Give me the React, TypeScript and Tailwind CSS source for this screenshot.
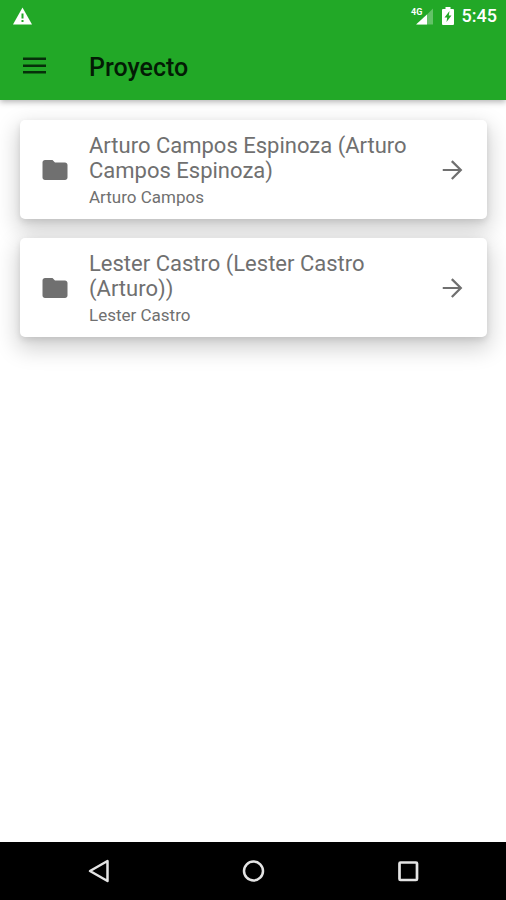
const projects = [
  { name: "Arturo Campos Espinoza (Arturo Campos Espinoza)", owner: "Arturo Campos" },
  { name: "Lester Castro (Lester Castro (Arturo))", owner: "Lester Castro" },
];

function StatusBar() {
  return (
    <div className="flex h-8 items-center justify-between pr-[9px] pl-3 text-white">
      <svg className="h-5 w-5" viewBox="0 0 20 20" aria-hidden="true">
        <path d="M10.500 1.500 20 18.500H1Z" fill="currentColor" />
        <path d="M9.500 7.500h2v5h-2zM9.500 14h2v2h-2z" fill="#22a827" />
      </svg>
      <div className="flex items-center">
        <svg className="h-5 w-6" viewBox="0 0 24 20" aria-hidden="true">
          <path d="M23 2.500v16H7Z" fill="currentColor" opacity=".3" />
          <path d="M17 8.500v10H6Z" fill="currentColor" />
          <text x="1" y="9" fontSize="9" fontWeight="700" fontFamily="Roboto, sans-serif" fill="currentColor">
            4G
          </text>
        </svg>
        <svg className="ml-2 h-5 w-3" viewBox="0 0 12 20" aria-hidden="true">
          <path d="M3.500 1h5v2H11q1 0 1 1v14q0 1-1 1H1q-1 0-1-1V4q0-1 1-1h2.500Z" fill="currentColor" />
          <path d="M7.500 5 2.500 11.500h2.700L4.500 16 9.500 9.500H6.800Z" fill="#22a827" />
        </svg>
        <span className="ml-2 text-[18px] leading-6 font-medium">5:45</span>
      </div>
    </div>
  );
}

function ProjectCard({ name, owner }: { name: string; owner: string }) {
  return (
    <li>
      <button
        type="button"
        className="flex w-full items-center rounded-[5px] bg-white px-5 py-3 text-left text-[#707070] shadow-[0_3px_6px_rgba(0,0,0,0.1),0_9px_22px_3px_rgba(0,0,0,0.18)]"
      >
        <svg className="size-[30px] shrink-0" viewBox="0 0 24 24" fill="currentColor" aria-hidden="true">
          <path d="M10 4H4c-1.100 0-1.990.9-1.990 2L2 18c0 1.100.9 2 2 2h16c1.100 0 2-.9 2-2V8c0-1.100-.9-2-2-2h-8l-2-2z" />
        </svg>
        <span className="ml-[19px] flex min-w-0 flex-1 flex-col gap-[5px] pt-px">
          <span className="text-[22px] leading-[25px]">{name}</span>
          <span className="text-[17px] leading-[19px]">{owner}</span>
        </span>
        <svg className="ml-4 size-[30px] shrink-0" viewBox="0 0 24 24" fill="currentColor" aria-hidden="true">
          <path d="M12.500 4.200l-1.300 1.300L17 11.200H4.600v1.600H17l-5.800 5.700 1.300 1.300L20.300 12z" />
        </svg>
      </button>
    </li>
  );
}

function NavigationBar() {
  return (
    <nav aria-label="System" className="flex h-[58px] items-center justify-center gap-[127px] bg-black text-[#e4e4e4]">
      <button type="button" aria-label="Back">
        <svg className="size-7" viewBox="0 0 28 28" fill="none" stroke="currentColor" strokeWidth="2.500" strokeLinejoin="round" aria-hidden="true">
          <path d="M23.500 4v20L6 14Z" />
        </svg>
      </button>
      <button type="button" aria-label="Home">
        <svg className="size-7" viewBox="0 0 28 28" fill="none" stroke="currentColor" strokeWidth="2.500" aria-hidden="true">
          <circle cx="14.500" cy="14" r="9.500" />
        </svg>
      </button>
      <button type="button" aria-label="Recent apps">
        <svg className="size-7" viewBox="0 0 28 28" fill="none" stroke="currentColor" strokeWidth="2.700" strokeLinejoin="round" aria-hidden="true">
          <rect x="5.500" y="5.500" width="17.500" height="17.500" rx="1" />
        </svg>
      </button>
    </nav>
  );
}

export default function App() {
  return (
    <div className="flex min-h-screen flex-col bg-white font-['Roboto',sans-serif]">
      <header className="relative z-10 bg-[#22a827] shadow-[0_2px_6px_rgba(0,0,0,0.3)]">
        <StatusBar />
        <div className="flex h-[68px] items-center px-5">
          <button type="button" aria-label="Menu" className="text-[#06300a]">
            <svg className="size-[30px]" viewBox="0 0 30 30" fill="currentColor" aria-hidden="true">
              <path d="M3 6.500h23v2.500H3zM3 13.500h23v2.500H3zM3 20h23v2.500H3z" />
            </svg>
          </button>
          <h1 className="ml-[39px] pt-[3px] text-[25px] leading-8 font-medium text-[#031c05]">Proyecto</h1>
        </div>
      </header>
      <main className="flex-1 pt-5 pr-[19px] pl-5">
        <ul className="flex flex-col gap-[19px]">
          {projects.map((project) => (
            <ProjectCard key={project.owner} name={project.name} owner={project.owner} />
          ))}
        </ul>
      </main>
      <NavigationBar />
    </div>
  );
}
